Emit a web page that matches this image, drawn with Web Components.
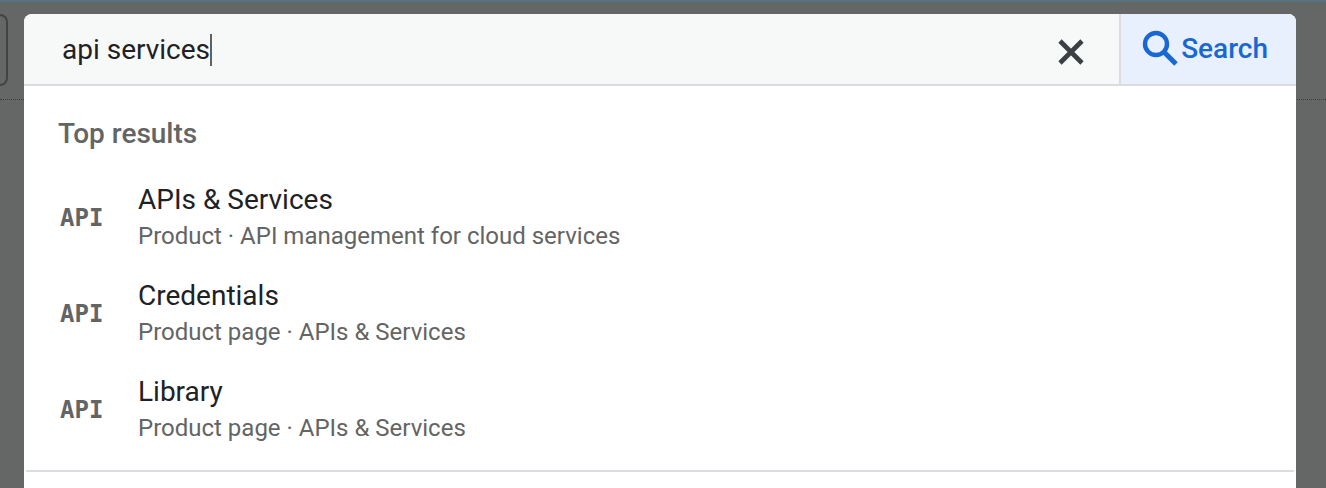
<!DOCTYPE html>
<html lang="en">
<head>
<meta charset="utf-8">
<meta name="viewport" content="width=device-width, initial-scale=1">
<title>Search</title>
<style>
  body {
    margin: 0;
    min-height: 100vh;
    overflow: hidden;
    background: #656766;
    font-family: Roboto, "Liberation Sans", sans-serif;
    color: #202124;
  }
</style>
</head>
<body>
<page-backdrop></page-backdrop>
<search-dialog>
  <search-bar slot="bar" value="api services"></search-bar>
  <result-group heading="Top results">
    <result-item name="APIs &amp; Services">Product · API management for cloud services</result-item>
    <result-item name="Credentials">Product page · APIs &amp; Services</result-item>
    <result-item name="Library">Product page · APIs &amp; Services</result-item>
  </result-group>
</search-dialog>

<script>
// ----- Dimmed page behind the dialog -----
class PageBackdrop extends HTMLElement {
  constructor() {
    super();
    this.attachShadow({ mode: "open" }).innerHTML = `
      <style>
        :host { display: block; border-top: 2px solid #5a7280; }
        .toolbar { padding: 12px 0 13px; border-bottom: 1px dotted #3c3e3d; }
        .box {
          box-sizing: border-box;
          width: 8px;
          height: 72px;
          border: 2px solid #414342;
          border-left: none;
          border-radius: 0 8px 8px 0;
        }
      </style>
      <div class="toolbar"><div class="box"></div></div>
    `;
  }
}

// ----- Dialog -----
class SearchDialog extends HTMLElement {
  constructor() {
    super();
    this.attachShadow({ mode: "open" }).innerHTML = `
      <style>
        :host {
          position: absolute;
          top: 14px;
          bottom: 0;
          left: 24px;
          right: 30px;
          overflow: hidden;
          background: #fff;
          border-radius: 8px 8px 0 0;
        }
      </style>
      <slot name="bar"></slot>
      <slot></slot>
    `;
  }
}

// ----- Search field with clear and submit buttons -----
class SearchBar extends HTMLElement {
  constructor() {
    super();
    this.attachShadow({ mode: "open" }).innerHTML = `
      <style>
        :host { display: block; background: #f7f9f8; border-bottom: 2px solid #dadce0; }
        form { display: flex; height: 70px; margin: 0; }
        .field { flex: 1; display: flex; align-items: center; padding: 2px 0 0 38px; min-width: 0; }
        input {
          field-sizing: content;
          border: none;
          padding: 0;
          outline: none;
          background: none;
          font: 28px/32px Roboto, "Liberation Sans", sans-serif;
          color: #202124;
        }
        .caret { width: 2px; height: 32px; background: #5f6162; }
        button { border: none; margin: 0; padding: 0; cursor: pointer; background: none; }
        .clear { display: flex; align-items: center; padding: 6px 34px 0; color: #3c4043; }
        .submit {
          display: flex;
          align-items: center;
          padding: 0 28px 0 20px;
          border-left: 2px solid #dadce0;
          background: #e8f0fe;
          color: #1967d2;
          font: 500 28px/32px Roboto, "Liberation Sans", sans-serif;
        }
        svg { display: block; fill: none; stroke: currentColor; }
      </style>
      <form role="search">
        <div class="field">
          <input type="text" aria-label="Search" autocomplete="off" spellcheck="false">
          <span class="caret"></span>
        </div>
        <button type="button" class="clear" aria-label="Clear search">
          <svg width="28" height="28" viewBox="0 0 28 28" stroke-width="4.6"><path d="M3 3L25 25M25 3L3 25"/></svg>
        </button>
        <button type="submit" class="submit">
          <svg width="40" height="40" viewBox="0 0 40 40" stroke-width="4.4">
            <circle cx="15" cy="15" r="11"/>
            <path d="M23 23L35 35" stroke-width="5"/>
          </svg>
          <span>Search</span>
        </button>
      </form>
    `;
  }

  connectedCallback() {
    const input = this.shadowRoot.querySelector("input");
    input.value = this.getAttribute("value") || "";
    this.shadowRoot.querySelector(".clear").addEventListener("click", () => {
      input.value = "";
      input.focus();
    });
    this.shadowRoot.querySelector("form").addEventListener("submit", (e) => e.preventDefault());
  }
}

// ----- Titled group of results -----
class ResultGroup extends HTMLElement {
  constructor() {
    super();
    this.attachShadow({ mode: "open" }).innerHTML = `
      <style>
        :host { display: block; margin: 0 2px; padding: 32px 0 12px; border-bottom: 2px solid #dadce0; }
        h2 { margin: 0 0 20px; padding-left: 32px; font: 500 28px/32px Roboto, "Liberation Sans", sans-serif; color: #636564; }
      </style>
      <h2></h2>
      <slot></slot>
    `;
  }

  connectedCallback() {
    this.shadowRoot.querySelector("h2").textContent = this.getAttribute("heading");
  }
}

// ----- One result -----
class ResultItem extends HTMLElement {
  constructor() {
    super();
    this.attachShadow({ mode: "open" }).innerHTML = `
      <style>
        :host { display: block; }
        a {
          display: grid;
          grid-template-columns: 44px 1fr;
          align-items: center;
          column-gap: 34px;
          height: 96px;
          padding-left: 34px;
          color: inherit;
          text-decoration: none;
        }
        .icon { font: bold 24px/32px "DejaVu Sans Mono", monospace; color: #636564; }
        .name { font-size: 28px; line-height: 36px; }
        .info { font-size: 24px; line-height: 36px; color: #636564; }
      </style>
      <a href="#">
        <span class="icon" aria-hidden="true">API</span>
        <div>
          <div class="name"></div>
          <div class="info"><slot></slot></div>
        </div>
      </a>
    `;
  }

  connectedCallback() {
    this.shadowRoot.querySelector(".name").textContent = this.getAttribute("name");
  }
}

customElements.define("page-backdrop", PageBackdrop);
customElements.define("search-dialog", SearchDialog);
customElements.define("search-bar", SearchBar);
customElements.define("result-group", ResultGroup);
customElements.define("result-item", ResultItem);
</script>
</body>
</html>
